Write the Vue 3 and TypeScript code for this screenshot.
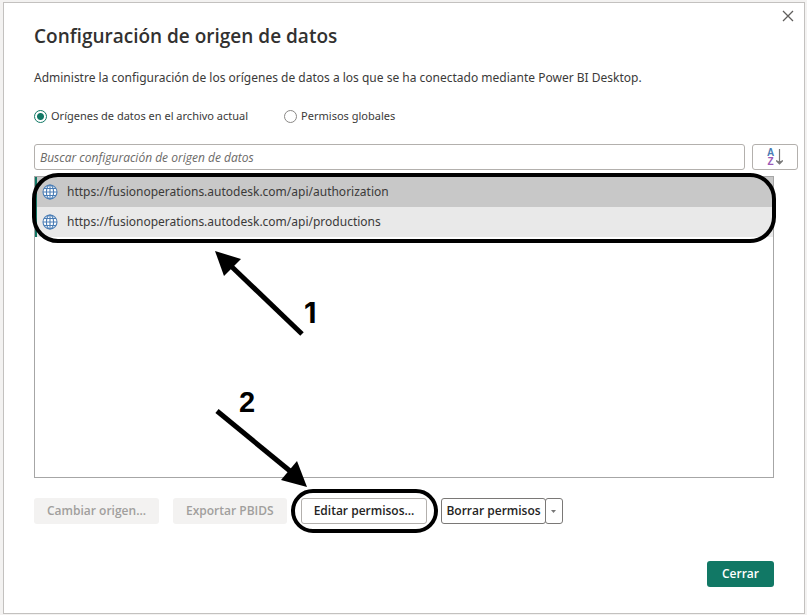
<script setup lang="ts">
import { ref } from 'vue'

type Scope = 'file' | 'global'

const scope = ref<Scope>('file')
const search = ref('')
const selected = ref(0)

const sources: string[] = [
  'https://fusionoperations.autodesk.com/api/authorization',
  'https://fusionoperations.autodesk.com/api/productions',
]
</script>

<template>
  <div class="page">
    <main class="dialog" role="dialog" aria-labelledby="dialog-title">
      <button class="close" type="button" aria-label="Cerrar ventana">
        <svg width="12" height="12" viewBox="0 0 12 12" aria-hidden="true">
          <path d="M1 1 L11 11 M11 1 L1 11" fill="none" stroke="#605e5c" stroke-width="1.3" />
        </svg>
      </button>

      <h1 id="dialog-title" class="title">Configuración de origen de datos</h1>
      <p class="description">
        Administre la configuración de los orígenes de datos a los que se ha conectado mediante Power BI Desktop.
      </p>

      <div class="scopes" role="radiogroup">
        <label class="scope">
          <input v-model="scope" type="radio" name="scope" value="file" />
          <span>Orígenes de datos en el archivo actual</span>
        </label>
        <label class="scope">
          <input v-model="scope" type="radio" name="scope" value="global" />
          <span>Permisos globales</span>
        </label>
      </div>

      <div class="search-row">
        <input
          v-model="search"
          class="search"
          type="text"
          placeholder="Buscar configuración de origen de datos"
          aria-label="Buscar configuración de origen de datos"
        />
        <button class="sort" type="button" aria-label="Ordenar">
          <span class="letters"><span class="a">A</span><span class="z">Z</span></span>
          <svg width="7" height="16" viewBox="0 0 7 16" aria-hidden="true">
            <path d="M3.5 0 V13" fill="none" stroke="#777" stroke-width="1.2" />
            <path d="M0 11 L3.5 12.6 L7 11 V12.2 L3.5 15.8 L0 12.2 Z" fill="#777" />
          </svg>
        </button>
      </div>

      <div class="list-box">
        <ul class="sources">
          <li v-for="(url, i) in sources" :key="url">
            <button class="source" :class="{ selected: i === selected }" type="button" @click="selected = i">
              <svg class="globe" width="16" height="16" viewBox="0 0 16 16" aria-hidden="true">
                <circle cx="8" cy="8" r="7" fill="#fff" />
                <g fill="none" stroke="#4a7db5" stroke-width="1.1">
                  <circle cx="8" cy="8" r="7" />
                  <ellipse cx="8" cy="8" rx="3.6" ry="7" />
                  <path d="M8 1 V15 M1 8 H15 M2 4.5 H14 M2 11.5 H14" />
                </g>
              </svg>
              <span>{{ url }}</span>
            </button>
          </li>
        </ul>
        <span class="frame list-frame" aria-hidden="true"></span>
      </div>

      <div class="actions">
        <button class="btn" type="button" disabled>Cambiar origen...</button>
        <button class="btn" type="button" disabled>Exportar PBIDS</button>
        <span class="edit">
          <button class="btn outlined" type="button">Editar permisos...</button>
          <span class="frame edit-frame" aria-hidden="true"></span>
        </span>
        <span class="split">
          <button class="btn split-main" type="button">Borrar permisos</button>
          <button class="btn split-more" type="button" aria-label="Más opciones">
            <svg width="5" height="3" viewBox="0 0 5 3" aria-hidden="true">
              <path d="M0 0 H5 L2.5 3 Z" fill="#777" />
            </svg>
          </button>
        </span>
      </div>

      <footer class="footer">
        <button class="btn primary" type="button">Cerrar</button>
      </footer>
    </main>

    <!-- Numbered arrows drawn over the dialog -->
    <svg class="arrows" width="360" height="500" viewBox="0 0 360 500" aria-hidden="true">
      <path d="M232 267 L302 334" fill="none" stroke="#000" stroke-width="5" />
      <path d="M215 251 L241 259 L224 276 Z" />
      <path d="M217 411 L290 471" fill="none" stroke="#000" stroke-width="5" />
      <path d="M307 487 L281 480 L297 461 Z" />
      <text class="one" x="304" y="323">1</text>
      <text x="239" y="412">2</text>
    </svg>
  </div>
</template>

<style>
body {
  margin: 0;
  background: #f3f2f1;
}
</style>

<style scoped>
* {
  box-sizing: border-box;
}

.page {
  position: relative;
  display: flex;
  min-height: 100vh;
  padding: 2px 2px 1px 3px;
  font-family: 'Noto Sans', 'Open Sans', sans-serif;
  font-size: 12px;
  line-height: 20px;
  color: #3b3a39;
}

.dialog {
  position: relative;
  display: flex;
  flex: 1;
  flex-direction: column;
  min-width: 0;
  padding: 21px 30px 26px;
  border: 1px solid #c3c1bf;
  background: #fff;
}

button,
input {
  margin: 0;
  font: inherit;
  color: inherit;
}

.close {
  position: absolute;
  top: 7px;
  right: 10px;
  display: flex;
  padding: 0;
  border: 0;
  background: none;
}

.title {
  margin: 0 0 20px;
  font-family: 'Open Sans', sans-serif;
  font-size: 19px;
  font-weight: 600;
  line-height: 24px;
  color: #323130;
}

.description {
  margin: 0 0 18px;
}

.scopes {
  display: flex;
  gap: 36px;
  margin-bottom: 18px;
  font-size: 11px;
}

.scope {
  display: flex;
  align-items: center;
  gap: 4px;
}

.scope input {
  appearance: none;
  width: 13px;
  height: 13px;
  border: 1px solid #8a8886;
  border-radius: 50%;
  background: #fff;
}

.scope input:checked {
  border-color: #117865;
  background: radial-gradient(circle, #117865 3px, #fff 4px);
}

.search-row {
  display: flex;
  gap: 7px;
  margin: 0 -24px 6px 0;
}

.search {
  flex: 1;
  min-width: 0;
  height: 26px;
  padding: 0 5px;
  border: 1px solid #b3b0ad;
  border-radius: 3px;
  background: #fff;
  font-family: 'Open Sans', sans-serif;
}

.search::placeholder {
  font-style: italic;
  color: #6b6967;
  opacity: 1;
}

.sort {
  display: flex;
  align-items: center;
  justify-content: center;
  gap: 2px;
  width: 46px;
  height: 26px;
  padding: 0;
  border: 1px solid #b3b0ad;
  border-radius: 3px;
  background: #fff;
}

.letters {
  display: grid;
  justify-items: center;
  font-family: 'Liberation Sans', sans-serif;
  font-size: 10px;
  font-weight: 700;
  line-height: 9px;
}

.a {
  color: #4a7db5;
}

.z {
  color: #9b59b6;
}

.list-box {
  position: relative;
  flex: 1;
  border: 1px solid #a6a6a6;
}

.sources {
  margin: 0;
  padding: 0;
  list-style: none;
}

.source {
  display: flex;
  align-items: center;
  gap: 9px;
  width: 100%;
  height: 30px;
  padding: 0 5px;
  border: 0;
  border-left: 2px solid #117865;
  background: #e9e9e9;
}

.source.selected {
  background: #c8c8c8;
}

.frame {
  position: absolute;
  border: 4px solid #000;
  pointer-events: none;
}

.list-frame {
  top: -4px;
  right: -3px;
  left: -3px;
  height: 70px;
  border-radius: 26px;
}

.actions {
  display: flex;
  gap: 14px;
  margin-top: 20px;
}

.btn {
  height: 26px;
  padding: 0 12px;
  border: 1px solid transparent;
  border-radius: 3px;
  background: #fff;
  font-family: 'Open Sans', sans-serif;
  font-weight: 600;
  line-height: 24px;
  color: #252423;
  white-space: nowrap;
}

.btn:disabled {
  background: #f3f2f1;
  color: #a19f9d;
}

.btn.outlined {
  border-color: #b3b0ad;
}

.edit {
  position: relative;
}

.edit-frame {
  top: -9px;
  right: -11px;
  bottom: -9px;
  left: -10px;
  border-radius: 26px;
}

.split {
  display: flex;
}

.btn.split-main {
  padding: 0 4px;
  border-color: #7a7876;
}

.btn.split-more {
  display: flex;
  align-items: center;
  justify-content: center;
  width: 18px;
  margin-left: -1px;
  padding: 0;
  border-color: #7a7876;
}

.footer {
  display: flex;
  justify-content: flex-end;
  margin-top: 37px;
}

.btn.primary {
  padding: 0 14px;
  background: #117865;
  color: #fff;
}

.arrows {
  position: absolute;
  top: 0;
  left: 0;
  pointer-events: none;
}

.arrows text {
  font-family: 'Liberation Sans', sans-serif;
  font-size: 29px;
  font-weight: 700;
}

.arrows .one {
  font-family: Inter, sans-serif;
}
</style>
